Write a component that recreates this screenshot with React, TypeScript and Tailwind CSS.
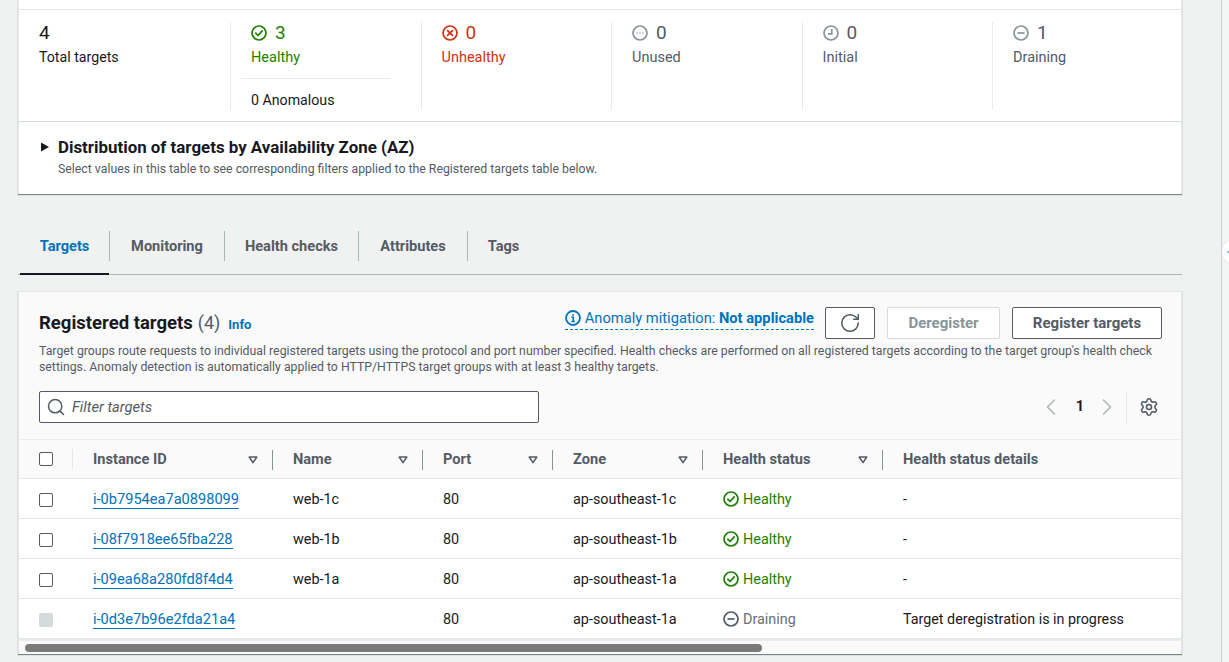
import { RotateCw, Search, ChevronLeft, ChevronRight, Settings } from "lucide-react";

const font = "font-['Roboto','Liberation_Sans',sans-serif]";

function StatusIcon({ kind, size = 16 }: { kind: string; size?: number }) {
  const color =
    kind === "ok" ? "#1d8102" : kind === "bad" ? "#d13212" : kind === "drain" ? "#545b64" : "#879596";
  return (
    <svg width={size} height={size} viewBox="0 0 16 16" fill="none" stroke={color} strokeWidth="1.7" className="shrink-0">
      <circle cx="8" cy="8" r="7" />
      {kind === "ok" && <path d="M4.8 8.2l2.3 2.3L11.2 5.9" strokeLinecap="round" strokeLinejoin="round" />}
      {kind === "bad" && <path d="M5.6 5.6l4.8 4.8M10.4 5.6l-4.8 4.8" strokeLinecap="round" />}
      {kind === "unused" && <path d="M4.6 8h1M7.5 8h1M10.4 8h1" strokeWidth="1.4" />}
      {kind === "clock" && <path d="M8.8 4v4.8H5" />}
      {(kind === "minus" || kind === "drain") && <path d="M4.5 8h7" />}
    </svg>
  );
}

function Stat({ kind, value, label, color }: { kind: string; value: string; label: string; color: string }) {
  return (
    <div className="w-[190.5px] shrink-0 h-[88px] border-l border-[#e9ebed] pl-[20px]">
      <div className={`flex items-center gap-[8px] h-[22px] text-[19px] ${color}`}>
        <StatusIcon kind={kind} />
        <span>{value}</span>
      </div>
      <div className={`mt-[4px] text-[14.5px] leading-[20px] ${color}`}>{label}</div>
      {kind === "ok" && (
        <div className="-ml-[10px] w-[149px] mt-[10px] border-t border-[#e9ebed] pl-[10px] pt-[11px] text-[14.2px] leading-[20px] text-[#16191f]">
          0 Anomalous
        </div>
      )}
    </div>
  );
}

function Tab({ label, active, w }: { label: string; active?: boolean; w: string }) {
  return (
    <div className={`${w} h-[56px] relative flex items-center justify-center text-[14.6px] font-bold ${active ? "text-[#0073bb]" : "text-[#545b64]"}`}>
      <span>{label}</span>
      {active && <div className="absolute left-0 right-0 bottom-0 h-[2px] bg-[#16191f]" />}
    </div>
  );
}

function TabSep() {
  return <div className="w-px h-[30px] bg-[#aab7b8] mt-[12px]" />;
}

function Caret() {
  return (
    <svg width="10" height="8" viewBox="0 0 10 8" fill="none" stroke="#545b64" strokeWidth="1.5">
      <path d="M1.2 1h7.6L5 6.6z" strokeLinejoin="round" />
    </svg>
  );
}

function Checkbox({ disabled }: { disabled?: boolean }) {
  return (
    <div className={`w-[14px] h-[14px] rounded-[2px] ${disabled ? "bg-[#d5dbdb]" : "border border-[#545b64] bg-white"}`} />
  );
}

const rows = [
  { id: "i-0b7954ea7a0898099", name: "web-1c", zone: "ap-southeast-1c", healthy: true, details: "-" },
  { id: "i-08f7918ee65fba228", name: "web-1b", zone: "ap-southeast-1b", healthy: true, details: "-" },
  { id: "i-09ea68a280fd8f4d4", name: "web-1a", zone: "ap-southeast-1a", healthy: true, details: "-" },
  { id: "i-0d3e7b96e2fda21a4", name: "", zone: "ap-southeast-1a", healthy: false, details: "Target deregistration is in progress" },
];

function HeadCell({ label, w, sep = true }: { label: string; w: string; sep?: boolean }) {
  return (
    <div className={`${w} flex items-center pl-[20px] pr-[10px] h-full pt-[1px]`}>
      <span className="flex-1 text-[14.6px] font-bold text-[#545b64]">{label}</span>
      {sep && <Caret />}
      {sep && <div className="w-px h-[20px] bg-[#879596] ml-[14px] -mr-[10px]" />}
    </div>
  );
}

export default function App() {
  return (
    <div className={`${font} w-[1229px] h-[662px] overflow-hidden bg-[#f0f2f2] relative text-[#16191f]`}>
      <div className="absolute right-0 top-0 bottom-0 w-[8px] bg-[#f4f5f5] border-l border-[#cfd2d2]" />
      <div className="absolute -right-[17px] top-[240px] w-[24px] h-[24px] rounded-full bg-white shadow-[0_0_3px_#d5dbdb]">
        <div className="absolute left-[5px] top-[11px] w-[2px] h-[2px] bg-[#8cc4e8]" />
      </div>

      <div className="pl-[18px] w-[1182px]">
        {/* Summary card */}
        <div className="bg-white border-x border-[#e4e7e7] shadow-[0_1px_1px_0_rgba(0,28,36,0.5)] h-[194px]">
          <div className="h-[10px] border-b border-[#e4e7e7]" />
          <div className="h-[112px] border-b border-[#d5dbdb] flex pt-[12px] pl-[20px] overflow-hidden">
            <div className="w-[191px] shrink-0">
              <div className="h-[22px] text-[19px] leading-[22px]">4</div>
              <div className="mt-[3px] text-[14.2px] leading-[20px]">Total targets</div>
            </div>
            <Stat kind="ok" value="3" label="Healthy" color="text-[#1d8102]" />
            <Stat kind="bad" value="0" label="Unhealthy" color="text-[#d13212]" />
            <Stat kind="unused" value="0" label="Unused" color="text-[#545b64]" />
            <Stat kind="clock" value="0" label="Initial" color="text-[#545b64]" />
            <Stat kind="minus" value="1" label="Draining" color="text-[#545b64]" />
          </div>
          <div className="pl-[21px] pt-[14px] flex items-start">
            <svg width="10" height="10" viewBox="0 0 10 10" className="mt-[6px] mr-[8px]">
              <path d="M1 .5L9 5L1 9.5z" fill="#16191f" />
            </svg>
            <div>
              <div className="text-[16.9px] leading-[22px] font-bold">Distribution of targets by Availability Zone (AZ)</div>
              <div className="mt-[3px] text-[12.3px] leading-[16px] text-[#545b64]">
                Select values in this table to see corresponding filters applied to the Registered targets table below.
              </div>
            </div>
          </div>
        </div>

        {/* Tabs */}
        <div className="mt-[25px] h-[56px] border-b border-[#aab7b8] flex">
          <Tab label="Targets" active w="w-[89px] ml-[2px]" />
          <TabSep />
          <Tab label="Monitoring" w="w-[114px]" />
          <TabSep />
          <Tab label="Health checks" w="w-[133px]" />
          <TabSep />
          <Tab label="Attributes" w="w-[108px]" />
          <TabSep />
          <Tab label="Tags" w="w-[71px]" />
        </div>

        {/* Targets card */}
        <div className="mt-[16px] h-[363px] bg-[#fafafa] border-x border-[#e4e7e7] border-t shadow-[0_1px_1px_0_rgba(0,28,36,0.5)]">
          <div className="pl-[20px] pr-[19px] pt-[15px]">
            <div className="flex items-start h-[32px]">
              <div className="flex items-baseline mt-[3px]">
                <span className="text-[18.5px] leading-[26px] font-bold">Registered targets</span>
                <span className="text-[18px] leading-[26px] text-[#545b64] ml-[5px]">(4)</span>
                <span className="text-[13px] font-bold text-[#0073bb] ml-[8px]">Info</span>
              </div>
              <div className="ml-auto flex items-start">
                <div className="flex items-center gap-[4px] h-[23px] mr-[11px] border-b border-dashed border-[#0073bb] text-[14.7px] text-[#0073bb]">
                  <svg width="16" height="16" viewBox="0 0 16 16" fill="none" stroke="#0073bb" className="shrink-0">
                    <circle cx="8" cy="8" r="7" strokeWidth="1.8" />
                    <path d="M6.4 7.2H8.2V11.4M6.4 11.4H10" strokeWidth="1.5" />
                    <path d="M8 4.2v1.6" strokeWidth="1.8" />
                  </svg>
                  <span>Anomaly mitigation: <b>Not applicable</b></span>
                </div>
                <button className="w-[50px] h-[32px] rounded-[2px] border border-[#545b64] bg-white flex items-center justify-center mr-[12px]">
                  <RotateCw size={22} color="#545b64" strokeWidth={1.7} />
                </button>
                <button className="w-[113px] h-[32px] rounded-[2px] border border-[#d5dbdb] bg-white text-[15px] font-bold text-[#879596] mr-[12px]">
                  Deregister
                </button>
                <button className="w-[150px] h-[32px] rounded-[2px] border border-[#545b64] bg-white text-[15px] font-bold text-[#545b64]">
                  Register targets
                </button>
              </div>
            </div>
            <p className="mt-[4px] text-[12.3px] leading-[16px] text-[#545b64] w-[1125px]">
              Target groups route requests to individual registered targets using the protocol and port number specified. Health checks are performed on all registered targets according to the target group's health check settings. Anomaly detection is automatically applied to HTTP/HTTPS target groups with at least 3 healthy targets.
            </p>
            <div className="mt-[16px] flex items-center h-[32px]">
              <div className="w-[500px] h-[32px] rounded-[2px] border border-[#545b64] bg-white flex items-center pl-[6px]">
                <Search size={20} color="#545b64" strokeWidth={1.8} />
                <span className="ml-[6px] mt-[1px] text-[14.7px] italic text-[#545b64]">Filter targets</span>
              </div>
              <div className="ml-auto flex items-center">
                <ChevronLeft size={28} color="#aab7b8" strokeWidth={1.3} />
                <span className="ml-[11px] mr-[9px] text-[14.5px] font-bold">1</span>
                <ChevronRight size={28} color="#aab7b8" strokeWidth={1.3} />
                <div className="w-px h-[32px] bg-[#e4e7e7] ml-[5px] mr-[12px]" />
                <Settings size={20} color="#545b64" strokeWidth={1.9} className="mr-[3px]" />
              </div>
            </div>
          </div>

          {/* Table */}
          <div className="mt-[16px] border-t border-[#e9ebed]">
            <div className="h-[39px] flex items-center border-b border-[#e4e7e7]">
              <div className="w-[54px] flex items-center pl-[20px] h-full relative">
                <Checkbox />
                <div className="absolute right-0 top-[9px] h-[20px] w-px bg-[#e4e7e7]" />
              </div>
              <HeadCell label="Instance ID" w="w-[200px]" />
              <HeadCell label="Name" w="w-[150px]" />
              <HeadCell label="Port" w="w-[130px]" />
              <HeadCell label="Zone" w="w-[150px]" />
              <HeadCell label="Health status" w="w-[180px]" />
              <HeadCell label="Health status details" w="w-[280px]" sep={false} />
            </div>
            <div className="bg-white">
              {rows.map((r) => (
                <div key={r.id} className="h-[40px] pt-[2px] flex items-center border-b border-[#e4e7e7] text-[14.4px]">
                  <div className="w-[54px] pl-[20px]"><Checkbox disabled={!r.healthy} /></div>
                  <div className="w-[200px] pl-[20px]">
                    <span className="text-[#0073bb] text-[14.6px] border-b border-[#0073bb] leading-[18px] inline-block">{r.id}</span>
                  </div>
                  <div className="w-[150px] pl-[20px]">{r.name}</div>
                  <div className="w-[130px] pl-[20px]">80</div>
                  <div className="w-[150px] pl-[20px]">{r.zone}</div>
                  <div className={`w-[180px] pl-[20px] flex items-center gap-[4px] ${r.healthy ? "text-[#1d8102]" : "text-[#687078]"}`}>
                    <StatusIcon kind={r.healthy ? "ok" : "drain"} />
                    {r.healthy ? "Healthy" : "Draining"}
                  </div>
                  <div className="pl-[20px] text-[14.3px]">{r.details}</div>
                </div>
              ))}
            </div>
            <div className="h-[15px] bg-[#fafafa] border-t-2 border-[#e9ebed] pt-[3px] pl-[6px]">
              <div className="w-[737px] h-[8px] rounded-full bg-[#7a7a7a]" />
            </div>
          </div>
        </div>
      </div>
    </div>
  );
}
